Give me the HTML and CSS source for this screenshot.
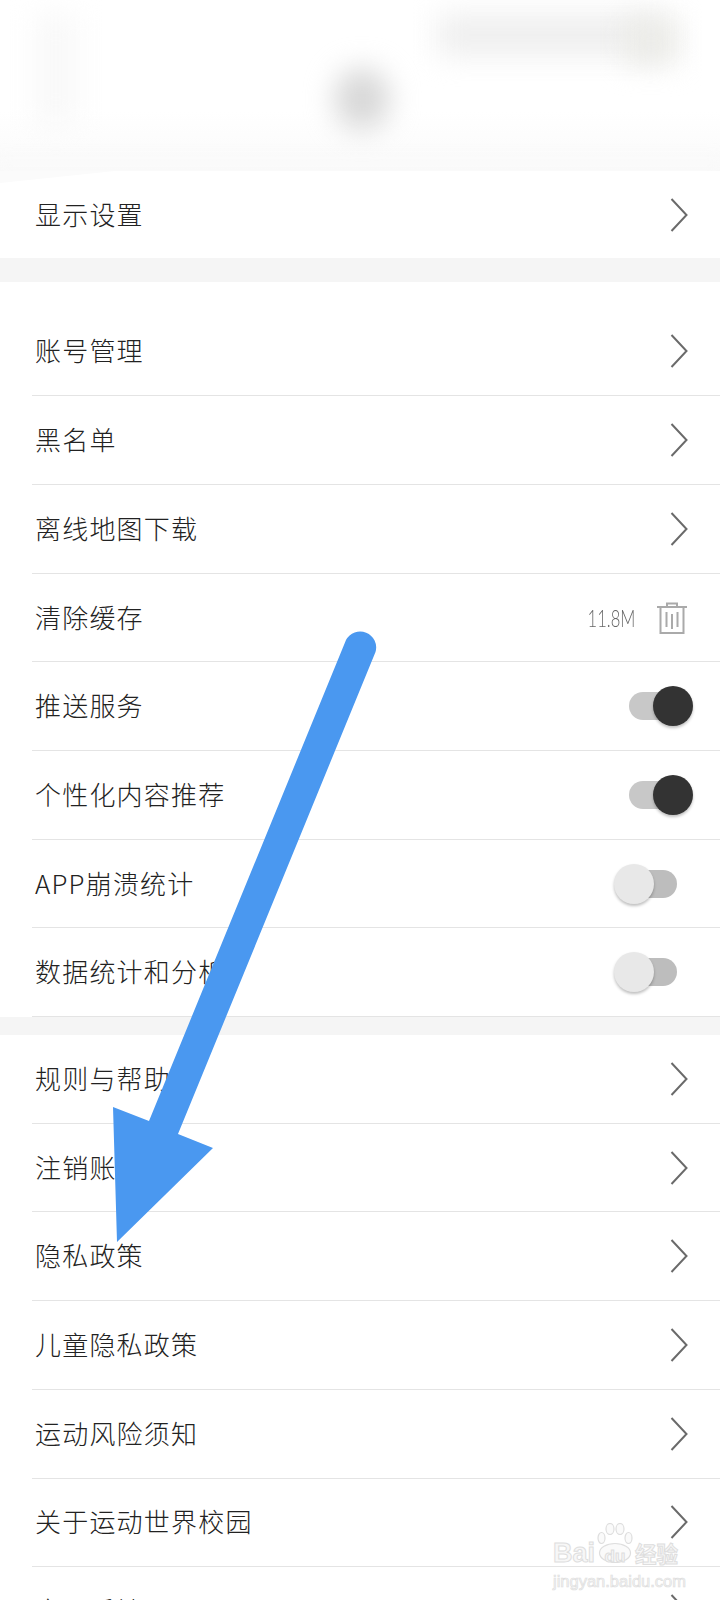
FILE: index.html
```html
<!DOCTYPE html>
<html lang="zh-CN">
<head>
    <meta charset="UTF-8">
    <meta name="viewport" content="width=device-width, initial-scale=1.0">
    <title>设置</title>
    <link rel="stylesheet" href="styles.css">
</head>
<body>
    <div class="page">
        <div class="blur-header">
            <div class="blob blob-left"></div>
            <div class="blob blob-mid"></div>
            <div class="blob blob-right"></div>
            <div class="blob blob-right-end"></div>
            <div class="blob blob-bottom"></div>
        </div>

        <div class="group">
            <div class="row row-plain">
                <span class="label">显示设置</span>
                <svg class="chevron" viewBox="0 0 18 34"><path d="M1.500 1 L16.500 17 L1.500 33"/></svg>
            </div>
        </div>

        <div class="group group-spaced">
            <div class="row">
                <span class="label">账号管理</span>
                <svg class="chevron" viewBox="0 0 18 34"><path d="M1.500 1 L16.500 17 L1.500 33"/></svg>
            </div>
            <div class="row">
                <span class="label">黑名单</span>
                <svg class="chevron" viewBox="0 0 18 34"><path d="M1.500 1 L16.500 17 L1.500 33"/></svg>
            </div>
            <div class="row">
                <span class="label">离线地图下载</span>
                <svg class="chevron" viewBox="0 0 18 34"><path d="M1.500 1 L16.500 17 L1.500 33"/></svg>
            </div>
            <div class="row">
                <span class="label">清除缓存</span>
                <div class="cache">
                    <span class="cache-size">11.8M</span>
                    <svg class="trash" viewBox="0 0 32 32">
                        <path d="M1 5 H31 M11 5 V1.500 H21 V5 M4.500 5 V31 H27.500 V5 M10.500 10 V25 M16 12 V27 M21.500 10 V25"/>
                    </svg>
                </div>
            </div>
            <div class="row">
                <span class="label">推送服务</span>
                <div class="toggle on"><span class="knob"></span></div>
            </div>
            <div class="row">
                <span class="label">个性化内容推荐</span>
                <div class="toggle on"><span class="knob"></span></div>
            </div>
            <div class="row">
                <span class="label">APP崩溃统计</span>
                <div class="toggle"><span class="knob"></span></div>
            </div>
            <div class="row">
                <span class="label">数据统计和分析</span>
                <div class="toggle"><span class="knob"></span></div>
            </div>
        </div>

        <div class="group group-last">
            <div class="row">
                <span class="label">规则与帮助</span>
                <svg class="chevron" viewBox="0 0 18 34"><path d="M1.500 1 L16.500 17 L1.500 33"/></svg>
            </div>
            <div class="row">
                <span class="label">注销账号</span>
                <svg class="chevron" viewBox="0 0 18 34"><path d="M1.500 1 L16.500 17 L1.500 33"/></svg>
            </div>
            <div class="row">
                <span class="label">隐私政策</span>
                <svg class="chevron" viewBox="0 0 18 34"><path d="M1.500 1 L16.500 17 L1.500 33"/></svg>
            </div>
            <div class="row">
                <span class="label">儿童隐私政策</span>
                <svg class="chevron" viewBox="0 0 18 34"><path d="M1.500 1 L16.500 17 L1.500 33"/></svg>
            </div>
            <div class="row">
                <span class="label">运动风险须知</span>
                <svg class="chevron" viewBox="0 0 18 34"><path d="M1.500 1 L16.500 17 L1.500 33"/></svg>
            </div>
            <div class="row">
                <span class="label">关于运动世界校园</span>
                <svg class="chevron" viewBox="0 0 18 34"><path d="M1.500 1 L16.500 17 L1.500 33"/></svg>
            </div>
            <div class="row">
                <span class="label">意见反馈</span>
                <svg class="chevron" viewBox="0 0 18 34"><path d="M1.500 1 L16.500 17 L1.500 33"/></svg>
            </div>
        </div>

        <!-- grey corner of the blurred header, over the first row -->
        <div class="header-corner"></div>

        <!-- annotation drawn over the screenshot -->
        <svg class="arrow" viewBox="0 0 720 1600">
            <path d="M149 1121 L346 640 A16 16 0 0 1 375.500 652 L178 1134 L213 1148 L117 1242 L113 1107 Z"/>
        </svg>

        <div class="watermark">
            <svg class="paw" viewBox="0 0 36 40">
                <ellipse cx="4.500" cy="15" rx="3.500" ry="5.500"/>
                <ellipse cx="13" cy="6" rx="4" ry="5.500"/>
                <ellipse cx="23" cy="6" rx="4" ry="5.500"/>
                <ellipse cx="31.500" cy="15" rx="3.500" ry="5.500"/>
                <ellipse cx="18" cy="30" rx="15.500" ry="9.500"/>
            </svg>
            <div class="wm-title"><span class="wm-bai">Bai</span><span class="wm-du">du</span><span class="wm-cn">经验</span></div>
            <div class="wm-url">jingyan.baidu.com</div>
        </div>
    </div>
</body>
</html>
```

FILE: styles.css
```css
body {
    margin: 0;
    background: #fff;
    color: #222;
    font-family: "Noto Sans CJK SC", "Noto Sans", sans-serif;
}

.page {
    position: relative;
    width: 720px;
    height: 1600px;
    overflow: hidden;
    background: #fff;
}

/* blurred-out header */
.blur-header {
    position: relative;
    height: 171px;
    overflow: hidden;
    background: linear-gradient(#fff 65%, #fafafa 100%);
}

.blob {
    position: absolute;
    filter: blur(14px);
}

.blob-left {
    left: 34px;
    top: 14px;
    width: 44px;
    height: 110px;
    background: #f9f9f9;
}

.blob-mid {
    left: 334px;
    top: 68px;
    width: 56px;
    height: 62px;
    border-radius: 50%;
    background: #d8d8d8;
}

.blob-right {
    left: 438px;
    top: 14px;
    width: 230px;
    height: 42px;
    background: #efefef;
}

.blob-right-end {
    left: 625px;
    top: 18px;
    width: 52px;
    height: 46px;
    background: #ecece8;
}

.blob-bottom {
    left: -20px;
    top: 168px;
    width: 760px;
    height: 24px;
    background: #f9f9f9;
}

.header-corner {
    position: absolute;
    top: 171px;
    left: 0;
    width: 115px;
    height: 12px;
    background: #fbfbfb;
    clip-path: polygon(0 0, 100% 0, 0 100%);
}

/* list */
.group-spaced {
    border-top: 24px solid #f5f5f5;
    padding-top: 25.600px;
}

.group-last {
    border-top: 18px solid #f5f5f5;
}

.row {
    display: flex;
    align-items: center;
    justify-content: space-between;
    box-sizing: border-box;
    height: 88.700px;
    margin-left: 32px;
    padding-right: 32px;
    border-bottom: 1px solid #e4e4e4;
}

.row-plain {
    height: 87px;
    border-bottom: none;
}

.label {
    margin-left: 3px;
    margin-bottom: 3px;
    font-size: 26px;
    font-weight: 300;
    letter-spacing: 1.200px;
    color: #222;
    white-space: nowrap;
}

.chevron {
    width: 18px;
    height: 34px;
    flex: none;
}

.chevron path {
    fill: none;
    stroke: #6a6a6a;
    stroke-width: 2;
}

.cache {
    display: flex;
    align-items: center;
    gap: 21px;
}

.cache-size {
    font-family: Lato, "Noto Sans", sans-serif;
    font-size: 23px;
    font-weight: 300;
    color: #666;
    transform: scaleX(0.72);
    transform-origin: right center;
}

.trash {
    width: 32px;
    height: 32px;
}

.trash path {
    fill: none;
    stroke: #aaa;
    stroke-width: 2;
}

/* switches */
.toggle {
    position: relative;
    width: 48px;
    height: 28px;
    margin-right: 11px;
    border-radius: 14px;
    background: #bdbdbd;
}

.toggle.on {
    background: #c8c8c8;
}

.knob {
    position: absolute;
    top: -6px;
    left: -15px;
    width: 40px;
    height: 40px;
    border-radius: 50%;
    background: #e8e8e8;
    box-shadow: 0 2px 3px rgba(0,0,0,0.25);
}

.toggle.on .knob {
    left: 24px;
    background: #333;
}

/* blue arrow */
.arrow {
    position: absolute;
    top: 0;
    left: 0;
    width: 720px;
    height: 1600px;
    fill: #4a98f0;
}

/* baidu watermark */
.watermark {
    position: absolute;
    left: 553px;
    top: 1523px;
    width: 130px;
    color: #f7f7f7;
    -webkit-text-stroke: 1px #dedede;
}

.paw {
    position: absolute;
    left: 44px;
    top: 0;
    width: 36px;
    height: 40px;
    fill: #fafafa;
    stroke: #dedede;
    stroke-width: 1.200;
}

.wm-title {
    position: relative;
    display: flex;
    align-items: baseline;
    margin-top: 15px;
    font-family: "Liberation Sans", sans-serif;
    font-size: 27px;
    font-weight: bold;
    line-height: 30px;
}

.wm-bai {
    width: 42px;
}

.wm-du {
    width: 40px;
    font-size: 17px;
    text-align: center;
}

.wm-cn {
    font-family: "Noto Sans CJK SC", sans-serif;
    font-size: 21.500px;
}

.wm-url {
    font-family: "Liberation Sans", sans-serif;
    font-size: 16.500px;
    line-height: 18px;
    white-space: nowrap;
    -webkit-text-stroke: 0.700px #dedede;
}
```
